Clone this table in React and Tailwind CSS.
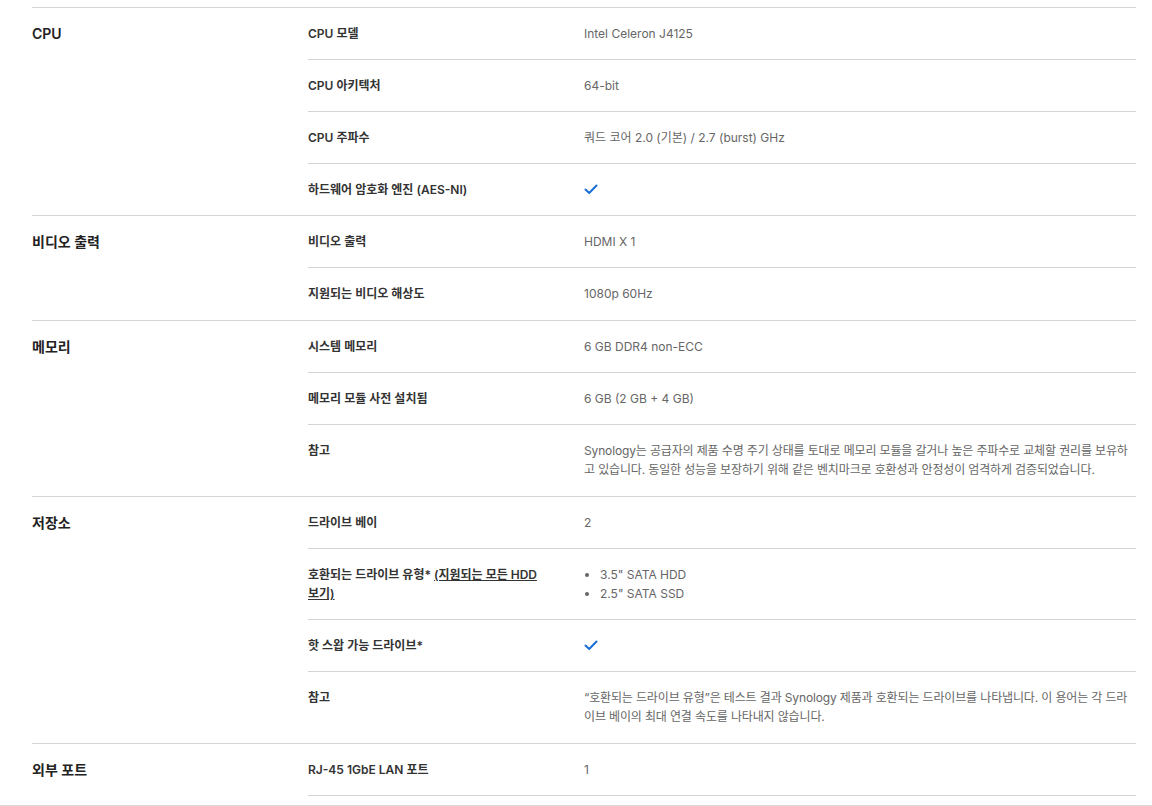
import React from "react";

const Check = () => (
  <svg width="14" height="11" viewBox="0 0 14 11" className="mt-1">
    <polyline
      points="1.5,5.5 5.2,9 12.5,1.5"
      fill="none"
      stroke="#1a6fd6"
      strokeWidth="2"
      strokeLinecap="round"
      strokeLinejoin="round"
    />
  </svg>
);

const specs = [
  {
    title: "CPU",
    rows: [
      { label: "CPU 모델", value: "Intel Celeron J4125" },
      { label: "CPU 아키텍처", value: "64-bit" },
      { label: "CPU 주파수", value: "쿼드 코어 2.0 (기본) / 2.7 (burst) GHz" },
      { label: "하드웨어 암호화 엔진 (AES-NI)", check: true },
    ],
  },
  {
    title: "비디오 출력",
    rows: [
      { label: "비디오 출력", value: "HDMI X 1" },
      { label: "지원되는 비디오 해상도", value: "1080p 60Hz", tall: true },
    ],
  },
  {
    title: "메모리",
    rows: [
      { label: "시스템 메모리", value: "6 GB DDR4 non-ECC" },
      { label: "메모리 모듈 사전 설치됨", value: "6 GB (2 GB + 4 GB)" },
      {
        label: "참고",
        tall: true,
        lines: [
          "Synology는 공급자의 제품 수명 주기 상태를 토대로 메모리 모듈을 갈거나 높은 주파수로 교체할 권리를 보유하",
          "고 있습니다. 동일한 성능을 보장하기 위해 같은 벤치마크로 호환성과 안정성이 엄격하게 검증되었습니다.",
        ],
      },
    ],
  },
  {
    title: "저장소",
    rows: [
      { label: "드라이브 베이", value: "2" },
      { label: "호환되는 드라이브 유형*", link: "(지원되는 모든 HDD 보기)", list: ['3.5" SATA HDD', '2.5" SATA SSD'] },
      { label: "핫 스왑 가능 드라이브*", check: true },
      {
        label: "참고",
        tall: true,
        lines: [
          "“호환되는 드라이브 유형”은 테스트 결과 Synology 제품과 호환되는 드라이브를 나타냅니다. 이 용어는 각 드라",
          "이브 베이의 최대 연결 속도를 나타내지 않습니다.",
        ],
      },
    ],
  },
  {
    title: "외부 포트",
    rows: [{ label: "RJ-45 1GbE LAN 포트", value: "1" }],
  },
];

export default function App() {
  return (
    <div
      className="bg-white min-h-screen pt-[7px] text-[#333]"
      style={{ fontFamily: "Inter, 'Noto Sans CJK KR', sans-serif" }}
    >
      <div className="ml-8 mr-4">
        {specs.map((cat, ci) => (
          <div key={cat.title} className="flex border-t border-[#d4d4d4]">
            <div className="w-[276px] shrink-0 py-4 text-[14px] leading-[19px] font-semibold text-[#222]">
              {cat.title}
            </div>
            <div className="flex-1">
              {cat.rows.map((r, ri) => (
                <div
                  key={ri}
                  className={
                    "flex pt-4 text-[12px] leading-[19px] " +
                    (r.tall ? "pb-[17px] " : "pb-4 ") +
                    (ri > 0 ? "border-t border-[#d4d4d4] " : "") +
                    (ci === specs.length - 1 && ri === cat.rows.length - 1 ? "border-b border-[#d4d4d4]" : "")
                  }
                >
                  <div className="w-[276px] shrink-0 pr-10 font-semibold text-[#333]">
                    {r.label}
                    {r.link && (
                      <>
                        {" "}
                        <span className="underline">{r.link}</span>
                      </>
                    )}
                  </div>
                  <div className="flex-1 text-[#666]">
                    {r.value}
                    {r.check && <Check />}
                    {r.lines &&
                      r.lines.map((l, i) => (
                        <div key={i} className="whitespace-nowrap tracking-[-0.012em]">
                          {l}
                        </div>
                      ))}
                    {r.list && (
                      <ul className="list-disc pl-4">
                        {r.list.map((x) => (
                          <li key={x}>{x}</li>
                        ))}
                      </ul>
                    )}
                  </div>
                </div>
              ))}
            </div>
          </div>
        ))}
      </div>
      <div className="mt-[9px] h-px bg-[#dcdcdc]" />
    </div>
  );
}
